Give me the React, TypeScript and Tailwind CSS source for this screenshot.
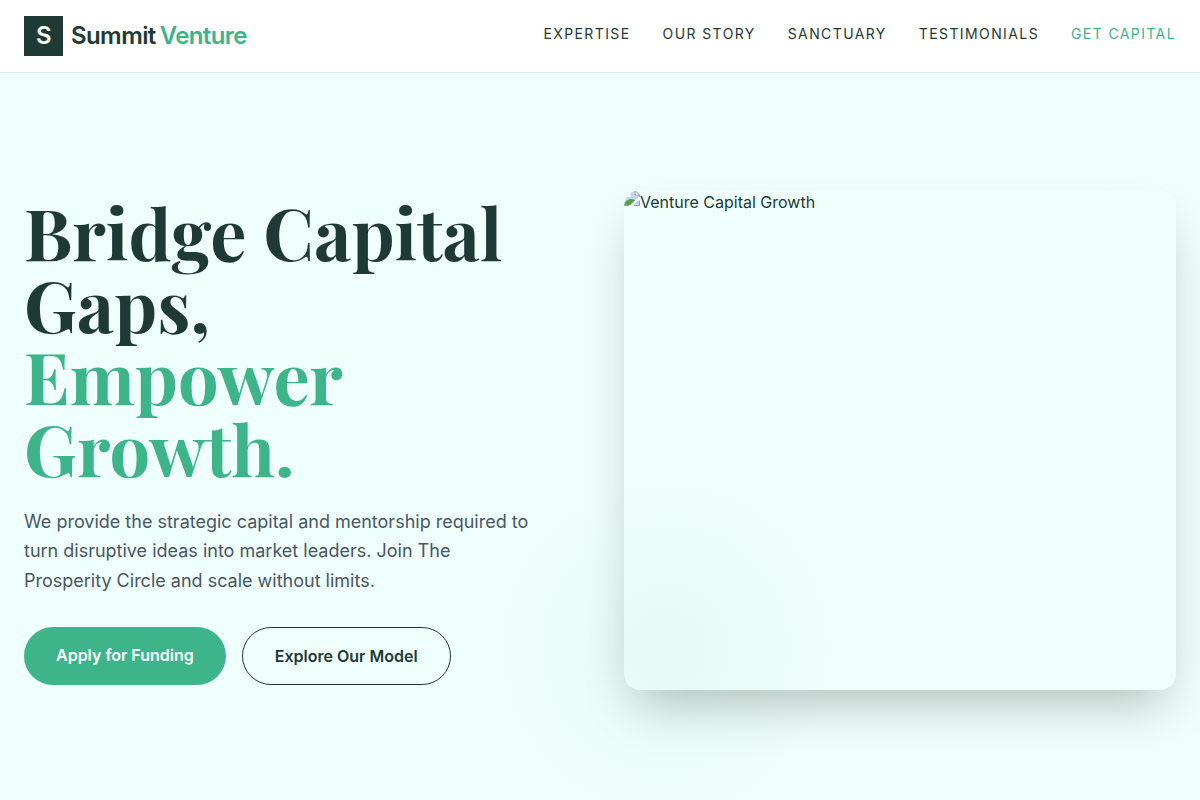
const navLinks = [
  { label: "Expertise", href: "#expertise" },
  { label: "Our Story", href: "#story" },
  { label: "Sanctuary", href: "#sanctuary" },
  { label: "Testimonials", href: "#testimonials" },
];

function Header() {
  return (
    <header className="fixed inset-x-0 top-0 z-10 border-b border-[#d9f3ea] bg-[#fefffe]">
      <div className="mx-auto flex max-w-7xl items-center justify-between px-6 py-4">
        <a href="#top" className="flex items-center gap-2 text-2xl font-semibold tracking-tight">
          <span className="flex h-10 items-center bg-[#1f3a34] px-3 text-white">S</span>
          <span className="flex gap-1">
            <span>Summit</span>
            <span className="text-[#3eb48b]">Venture</span>
          </span>
        </a>
        <nav className="flex gap-8 pb-1 text-sm tracking-widest uppercase">
          {navLinks.map((link) => (
            <a key={link.href} href={link.href}>
              {link.label}
            </a>
          ))}
          <a href="#capital" className="text-[#3eb48b]">
            Get Capital
          </a>
        </nav>
      </div>
    </header>
  );
}

function MissingImageIcon() {
  return (
    <svg viewBox="0 0 16 16" className="size-4 shrink-0" aria-hidden="true">
      <path d="M0 0H11L16 5V16H0Z" fill="#c3d4f2" />
      <path d="M2 5a2 2 0 0 1 4 0h1v2H1Z" fill="#fff" />
      <path d="M0 15C2 9 8 7 12 11L7 15Z" fill="#55a344" />
      <path d="M16 6V9L8 16H5Z" fill="#fff" />
      <path d="M11 0V5H16Z" fill="#fff" />
      <path d="M0 .5H11L15.5 5V7M11 .5V5H15.5M15.5 11V15.5H10M0 15.5H5" fill="none" stroke="#9aa0a6" />
    </svg>
  );
}

function Hero() {
  return (
    <section id="top" className="flex min-h-screen items-center pt-20">
      <div className="mx-auto grid w-full max-w-7xl grid-cols-2 items-center gap-12 px-6">
        <div>
          <h1 className="mb-6 font-['Playfair_Display','Liberation_Serif',serif] text-7xl leading-none font-bold">
            Bridge Capital Gaps, <br />
            <span className="text-[#3eb48b]">Empower Growth.</span>
          </h1>
          <p className="mb-8 max-w-lg text-lg leading-relaxed text-[#4a5565]">
            We provide the strategic capital and mentorship required to turn disruptive ideas into market
            leaders. Join The Prosperity Circle and scale without limits.
          </p>
          <div className="flex gap-4 font-semibold">
            <a href="#capital" className="rounded-full bg-[#3eb48b] px-8 py-4 text-white">
              Apply for Funding
            </a>
            <a href="#expertise" className="rounded-full border border-[#1f3a34] px-8 py-4">
              Explore Our Model
            </a>
          </div>
        </div>
        <div className="relative">
          <div className="flex h-[500px] items-start overflow-hidden rounded-2xl shadow-2xl">
            <MissingImageIcon />
            <span>Venture Capital Growth</span>
          </div>
          <div className="pointer-events-none absolute -bottom-32 -left-32 size-[340px] rounded-full bg-[radial-gradient(closest-side,rgba(62,180,150,0.06),rgba(62,180,150,0.03)_50%,transparent)]" />
        </div>
      </div>
    </section>
  );
}

export default function App() {
  return (
    <div className="overflow-x-hidden bg-[#effffb] font-['Inter',sans-serif] text-[#1f3a34]">
      <Header />
      <main>
        <Hero />
      </main>
    </div>
  );
}
